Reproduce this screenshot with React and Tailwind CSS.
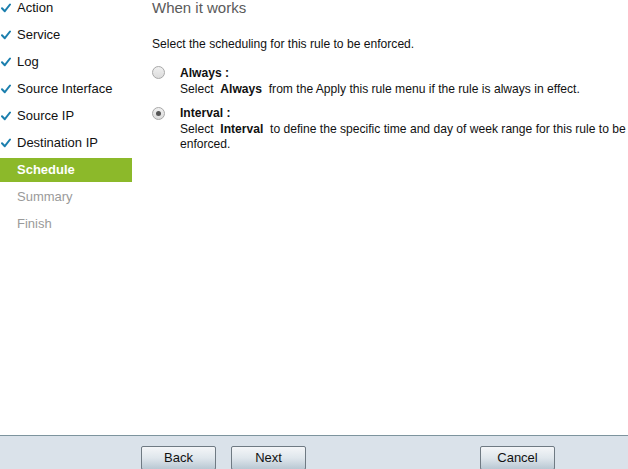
import React from "react";

const Check = () => (
  <svg width="10" height="10" viewBox="0 0 10 10" className="shrink-0">
    <path d="M1 5.2 L3.8 8.2 L9 1.5" fill="none" stroke="#1b7fae" strokeWidth="2" strokeLinecap="round" strokeLinejoin="round" />
  </svg>
);

const done = ["Action", "Service", "Log", "Source Interface", "Source IP", "Destination IP"];

const Radio = ({ checked }) => (
  <div className="w-[13px] h-[13px] rounded-full border border-[#a8a8a8] bg-gradient-to-b from-[#f0f0f0] to-[#dcdcdc] flex items-center justify-center shrink-0">
    {checked && <div className="w-[5px] h-[5px] rounded-full bg-[#555]" />}
  </div>
);

const Btn = ({ children, className = "" }) => (
  <button className={"h-[24px] w-[75px] border border-[#6f7a83] rounded-[2px] bg-gradient-to-b from-[#f4f6f8] via-[#dfe6ec] to-[#b9c8d3] text-[13px] text-[#111] " + className}>
    {children}
  </button>
);

export default function App() {
  return (
    <div className="w-[628px] h-[469px] flex flex-col bg-white overflow-hidden" style={{ fontFamily: '"Liberation Sans", Arial, sans-serif' }}>
      <div className="flex-1 flex">
        <div className="w-[132px] shrink-0 -mt-[6px]">
          {done.map((t) => (
            <div key={t} className="h-[27px] flex items-center gap-[6px] pl-[1px] text-[13px] text-[#111]">
              <Check />
              <span>{t}</span>
            </div>
          ))}
          <div className="h-[27px] flex items-center">
            <div className="h-[24px] w-full bg-[#8cb92a] flex items-center pl-[17px] text-[13px] font-bold text-white">Schedule</div>
          </div>
          <div className="h-[27px] flex items-center pl-[17px] text-[13px] text-[#9a9a9a]">Summary</div>
          <div className="h-[27px] flex items-center pl-[17px] text-[13px] text-[#9a9a9a]">Finish</div>
        </div>
        <div className="flex-1 min-w-0 pl-[20px] text-[12.1px] text-[#111]">
          <div className="text-[15px] text-[#5a5a5a] leading-[17px] -mt-[1px]">When it works</div>
          <div className="mt-[20px] leading-[16px]">Select the scheduling for this rule to be enforced.</div>
          <div className="mt-[13px] flex">
            <div className="w-[28px] shrink-0 pt-[1px]"><Radio /></div>
            <div className="leading-[16px]">
              <div className="font-bold">Always :</div>
              <div>Select&nbsp; <b>Always</b>&nbsp; from the Apply this rule menu if the rule is always in effect.</div>
            </div>
          </div>
          <div className="mt-[9px] flex">
            <div className="w-[28px] shrink-0 pt-[1px]"><Radio checked /></div>
            <div className="leading-[15.5px] whitespace-nowrap">
              <div className="font-bold">Interval :</div>
              <div>Select&nbsp; <b>Interval</b>&nbsp; to define the specific time and day of week range for this rule to be</div>
              <div>enforced.</div>
            </div>
          </div>
        </div>
      </div>
      <div className="h-[34px] shrink-0 border-t border-[#7d949e] bg-[#dae2ea] flex items-start pt-[10px]">
        <Btn className="ml-[141px]">Back</Btn>
        <Btn className="ml-[15px]">Next</Btn>
        <Btn className="ml-[174px]">Cancel</Btn>
      </div>
    </div>
  );
}
